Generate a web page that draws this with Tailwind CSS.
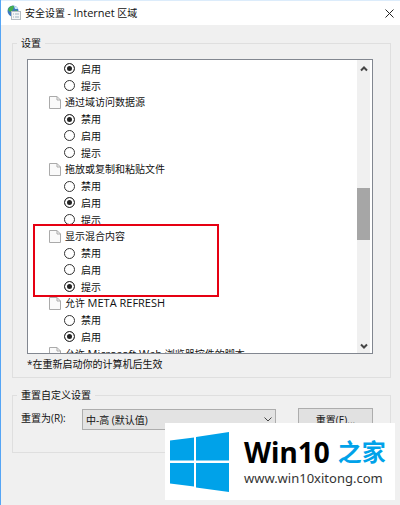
<!DOCTYPE html>
<html lang="zh-CN">
<head>
    <meta charset="UTF-8">
    <meta name="viewport" content="width=device-width, initial-scale=1.0">
    <title>安全设置 - Internet 区域</title>

    <!-- Tailwind CSS CDN -->
    <script src="https://cdn.jsdelivr.net/npm/@tailwindcss/browser@4"></script>
</head>
<body class="relative min-h-screen overflow-hidden border-l border-[#55a5f5] bg-[#f0f0f0] font-['Open_Sans','Noto_Sans_CJK_SC',sans-serif] text-[10px] leading-4 text-[#111]">

    <!-- Title bar -->
    <header class="flex h-[25px] items-center border-t border-[#dcecfb] bg-white pl-1.5 pr-1">
        <svg class="h-4 w-4" viewBox="0 0 16 16">
            <circle cx="6" cy="6" r="5.5" fill="#3c78c0"/>
            <path d="M2 2.500Q5 0 7 1L6 5L3 7L1 5ZM7 6L10 5L10 9L7 10Z" fill="#46b04c"/>
            <path d="M7 1Q10 1 11 4L8 4Z" fill="#c8e8f8"/>
            <rect x="4.500" y="6.500" width="9" height="8" fill="#f4f6f7" stroke="#b4bcc2"/>
            <path d="M6 9h1M6 12h1M8 9h4M8 12h4" stroke="#9fb4c2"/>
        </svg>
        <h1 class="ml-0.5 flex-1">安全设置 - <span class="text-[11px]">Internet</span> 区域</h1>
        <button type="button" aria-label="关闭" class="p-0.5">
            <svg class="h-[9px] w-[9px]" viewBox="0 0 9 9"><path d="M.5 .5L8.500 8.500M8.500 .5L.5 8.500" stroke="#222"/></svg>
        </button>
    </header>

    <main class="flex flex-col gap-[9px] px-[9px] pl-[11px] pt-2.5">
        <!-- Settings -->
        <fieldset class="border border-[#dfdfdf] pb-[5px] pl-3.5 pr-[17px]">
            <legend class="-ml-2.5 px-1">设置</legend>
            <div class="mt-2 flex h-[295px] overflow-hidden border border-[#828790] bg-white">
                <div class="flex-1 pl-[21px]">
                    <div class="grid h-[34px] grid-rows-2 pl-[15px]">
                        <label class="flex items-center gap-1.5"><input type="radio" name="prev" checked class="h-[11px] w-[11px] appearance-none rounded-full border border-[#333] bg-white checked:bg-[#222] checked:shadow-[inset_0_0_0_2px_white]">启用</label>
                        <label class="flex items-center gap-1.5"><input type="radio" name="prev" class="h-[11px] w-[11px] appearance-none rounded-full border border-[#333] bg-white checked:bg-[#222] checked:shadow-[inset_0_0_0_2px_white]">提示</label>
                    </div>

                    <div class="grid h-[67px] grid-rows-4">
                        <div class="flex items-center gap-1">
                            <svg class="h-[15px] w-3" viewBox="0 0 12 15"><path d="M.5 1.500H8L11.500 5V13.500H.5Z" fill="#fafafa" stroke="#aaa"/><path d="M8 1.500V5H11.500" fill="none" stroke="#aaa"/></svg>
                            <span>通过域访问数据源</span>
                        </div>
                        <label class="flex items-center gap-1.5 pl-[15px]"><input type="radio" name="domain" checked class="h-[11px] w-[11px] appearance-none rounded-full border border-[#333] bg-white checked:bg-[#222] checked:shadow-[inset_0_0_0_2px_white]">禁用</label>
                        <label class="flex items-center gap-1.5 pl-[15px]"><input type="radio" name="domain" class="h-[11px] w-[11px] appearance-none rounded-full border border-[#333] bg-white checked:bg-[#222] checked:shadow-[inset_0_0_0_2px_white]">启用</label>
                        <label class="flex items-center gap-1.5 pl-[15px]"><input type="radio" name="domain" class="h-[11px] w-[11px] appearance-none rounded-full border border-[#333] bg-white checked:bg-[#222] checked:shadow-[inset_0_0_0_2px_white]">提示</label>
                    </div>

                    <div class="grid h-[67px] grid-rows-4">
                        <div class="flex items-center gap-1">
                            <svg class="h-[15px] w-3" viewBox="0 0 12 15"><path d="M.5 1.500H8L11.500 5V13.500H.5Z" fill="#fafafa" stroke="#aaa"/><path d="M8 1.500V5H11.500" fill="none" stroke="#aaa"/></svg>
                            <span>拖放或复制和粘贴文件</span>
                        </div>
                        <label class="flex items-center gap-1.5 pl-[15px]"><input type="radio" name="drag" class="h-[11px] w-[11px] appearance-none rounded-full border border-[#333] bg-white checked:bg-[#222] checked:shadow-[inset_0_0_0_2px_white]">禁用</label>
                        <label class="flex items-center gap-1.5 pl-[15px]"><input type="radio" name="drag" checked class="h-[11px] w-[11px] appearance-none rounded-full border border-[#333] bg-white checked:bg-[#222] checked:shadow-[inset_0_0_0_2px_white]">启用</label>
                        <label class="flex items-center gap-1.5 pl-[15px]"><input type="radio" name="drag" class="h-[11px] w-[11px] appearance-none rounded-full border border-[#333] bg-white checked:bg-[#222] checked:shadow-[inset_0_0_0_2px_white]">提示</label>
                    </div>

                    <!-- Highlighted group -->
                    <div class="relative grid h-[67px] grid-rows-4">
                        <div class="absolute -left-4 -top-1 h-[73px] w-[186px] border-2 border-[#e60012]"></div>
                        <div class="flex items-center gap-1">
                            <svg class="h-[15px] w-3" viewBox="0 0 12 15"><path d="M.5 1.500H8L11.500 5V13.500H.5Z" fill="#fafafa" stroke="#aaa"/><path d="M8 1.500V5H11.500" fill="none" stroke="#aaa"/></svg>
                            <span>显示混合内容</span>
                        </div>
                        <label class="flex items-center gap-1.5 pl-[15px]"><input type="radio" name="mixed" class="h-[11px] w-[11px] appearance-none rounded-full border border-[#333] bg-white checked:bg-[#222] checked:shadow-[inset_0_0_0_2px_white]">禁用</label>
                        <label class="flex items-center gap-1.5 pl-[15px]"><input type="radio" name="mixed" class="h-[11px] w-[11px] appearance-none rounded-full border border-[#333] bg-white checked:bg-[#222] checked:shadow-[inset_0_0_0_2px_white]">启用</label>
                        <label class="flex items-center gap-1.5 pl-[15px]"><input type="radio" name="mixed" checked class="h-[11px] w-[11px] appearance-none rounded-full border border-[#333] bg-white checked:bg-[#222] checked:shadow-[inset_0_0_0_2px_white]">提示</label>
                    </div>

                    <div class="grid h-[67px] grid-rows-4">
                        <div class="flex items-center gap-1">
                            <svg class="h-[15px] w-3" viewBox="0 0 12 15"><path d="M.5 1.500H8L11.500 5V13.500H.5Z" fill="#fafafa" stroke="#aaa"/><path d="M8 1.500V5H11.500" fill="none" stroke="#aaa"/></svg>
                            <span>允许 <span class="text-[11px]">META REFRESH</span></span>
                        </div>
                        <label class="flex items-center gap-1.5 pl-[15px]"><input type="radio" name="meta" class="h-[11px] w-[11px] appearance-none rounded-full border border-[#333] bg-white checked:bg-[#222] checked:shadow-[inset_0_0_0_2px_white]">禁用</label>
                        <label class="flex items-center gap-1.5 pl-[15px]"><input type="radio" name="meta" checked class="h-[11px] w-[11px] appearance-none rounded-full border border-[#333] bg-white checked:bg-[#222] checked:shadow-[inset_0_0_0_2px_white]">启用</label>
                        <div class="flex items-center gap-1">
                            <svg class="h-[15px] w-3" viewBox="0 0 12 15"><path d="M.5 1.500H8L11.500 5V13.500H.5Z" fill="#fafafa" stroke="#aaa"/><path d="M8 1.500V5H11.500" fill="none" stroke="#aaa"/></svg>
                            <span>允许 <span class="text-[11px]">Microsoft Web</span> 浏览器控件的脚本</span>
                        </div>
                    </div>
                </div>

                <!-- Scrollbar -->
                <div class="mr-0.5 flex w-[13px] flex-col items-center bg-[#f0f0f0] pb-1 pt-1.5">
                    <svg class="h-1.5 w-2" viewBox="0 0 8 6"><path d="M1 4.500L4 1.500L7 4.500" fill="none" stroke="#444" stroke-width="2"/></svg>
                    <div class="mt-[116px] h-[52px] w-full bg-[#a6a6a6]"></div>
                    <svg class="mt-auto h-1.5 w-2" viewBox="0 0 8 6"><path d="M1 1.500L4 4.500L7 1.500" fill="none" stroke="#444" stroke-width="2"/></svg>
                </div>
            </div>
            <p class="mt-0.5">*在重新启动你的计算机后生效</p>
        </fieldset>

        <!-- Reset custom settings -->
        <fieldset class="h-[66px] border border-[#dfdfdf] pl-2 pr-[17px]">
            <legend class="-ml-1 px-1">重置自定义设置</legend>
            <div class="mt-[5px] flex items-start">
                <label for="level" class="w-[61px] py-0.5">重置为(R):</label>
                <div class="relative mt-px flex-1">
                    <select id="level" class="block h-[21px] w-full appearance-none border border-[#adadad] bg-[#e3e3e3] pl-[3px]">
                        <option>中-高 (默认值)</option>
                    </select>
                    <svg class="pointer-events-none absolute right-1 top-2 h-[5px] w-2" viewBox="0 0 8 5"><path d="M.5 .5L4 4L7.500 .5" fill="none" stroke="#444"/></svg>
                </div>
                <button type="button" class="ml-[22px] h-[23px] w-[75px] border border-[#adadad] bg-[#e1e1e1]">重置(E)...</button>
            </div>
        </fieldset>
    </main>

    <!-- Site badge -->
    <div class="absolute bottom-[5px] right-[5px] flex h-[77px] w-[230px] items-center bg-white pl-[5px]">
        <svg class="h-[60px] w-[59px]" viewBox="0 0 59 60" fill="#00a2e9"><path d="M0 8.500L24 5.500V28.500H0ZM26 5L59 0V28.500H26ZM0 31H24V54.500L0 51.500ZM26 31H59V60L26 55.500Z"/></svg>
        <div class="ml-[15px]">
            <p class="flex items-center gap-2 whitespace-nowrap font-['Noto_Sans','Noto_Sans_CJK_SC',sans-serif] text-[28px] font-bold leading-8 text-black">Win10 <span class="text-[24px] text-[#00a2e9]">之家</span></p>
            <a href="#" class="block font-['Noto_Sans',sans-serif] text-[13px] leading-5 text-[#333]">www.win10xitong.com</a>
        </div>
    </div>
</body>
</html>
